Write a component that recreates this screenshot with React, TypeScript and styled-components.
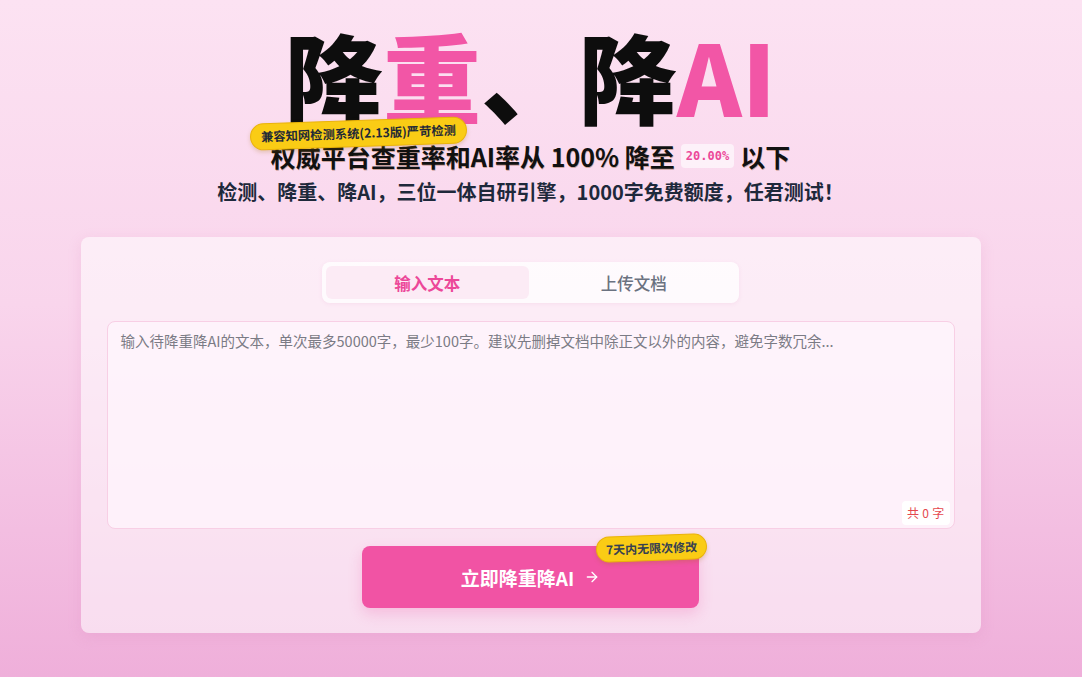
import styled, { createGlobalStyle } from "styled-components";
import { ArrowRight } from "lucide-react";

const GlobalStyle = createGlobalStyle`
  html, body {
    margin: 0;
    padding: 0;
  }
  body {
    min-height: 100vh;
    font-family: "Noto Sans CJK SC", "Noto Sans", sans-serif;
    background: linear-gradient(180deg, #fce2f2 0%, #f9d5ec 45%, #efafda 100%);
    background-attachment: fixed;
  }
  * {
    box-sizing: border-box;
  }
`;

const Page = styled.main`
  min-height: 100vh;
  display: flex;
  flex-direction: column;
  align-items: center;
  padding: 25px 21px 0 0;
`;

const Title = styled.h1`
  margin: 0;
  font-size: 98px;
  line-height: 1;
  font-weight: 900;
  color: #0d0d0d;
  white-space: nowrap;
`;

const Pink = styled.span`
  color: #f256a6;
`;

const Subtitle = styled.div`
  position: relative;
  margin-top: 17px;
  font-size: 25px;
  line-height: 32px;
  font-weight: 700;
  color: #111;
  display: flex;
  align-items: center;
  gap: 6px;
  text-shadow: 0.5px 0.5px 0 rgba(120, 60, 0, 0.35);
`;

const Sticker = styled.span`
  position: absolute;
  background: #facc15;
  border: 1px solid #eab308;
  color: #1f2937;
  font-size: 12.3px;
  font-weight: 700;
  line-height: 17px;
  padding: 4px 10px;
  border-radius: 999px;
  white-space: nowrap;
  box-shadow: 0 2px 4px rgba(160, 110, 0, 0.25);
  transform: rotate(-2deg);
  text-shadow: none;
`;

const TitleSticker = styled(Sticker)`
  left: -21px;
  top: -20px;
`;

const Chip = styled.span`
  font-family: "DejaVu Sans Mono", "Liberation Mono", monospace;
  font-size: 12px;
  font-weight: 700;
  color: #ec4899;
  background: rgba(255, 255, 255, 0.6);
  border-radius: 4px;
  padding: 4px 5px;
  line-height: 16px;
  text-shadow: none;
`;

const Tagline = styled.p`
  margin: 6px 0 0;
  font-size: 20px;
  line-height: 28px;
  font-weight: 700;
  color: #1e293b;
`;

const Card = styled.section`
  margin-top: 31px;
  width: 900px;
  padding: 25px 26px 25px;
  background: rgba(255, 255, 255, 0.55);
  border-radius: 8px;
  box-shadow: 0 4px 14px rgba(214, 120, 180, 0.18);
  display: flex;
  flex-direction: column;
  align-items: center;
`;

const Tabs = styled.div`
  width: 417px;
  display: flex;
  padding: 4px;
  gap: 4px;
  background: rgba(255, 255, 255, 0.75);
  border-radius: 8px;
  box-shadow: 0 1px 4px rgba(214, 120, 180, 0.12);
`;

const Tab = styled.button<{ $active?: boolean }>`
  flex: 1;
  height: 33px;
  border: none;
  border-radius: 6px;
  font-family: inherit;
  font-size: 16.5px;
  font-weight: ${({ $active }) => ($active ? 700 : 500)};
  color: ${({ $active }) => ($active ? "#ec4899" : "#6b7280")};
  background: ${({ $active }) => ($active ? "#fcebf5" : "transparent")};
  cursor: pointer;
`;

const Editor = styled.div`
  position: relative;
  margin-top: 18px;
  width: 100%;
  height: 208px;
  border: 1px solid #f8cfe5;
  border-radius: 8px;
  background: rgba(255, 246, 252, 0.75);
`;

const TextInput = styled.textarea`
  width: 100%;
  height: 100%;
  border: none;
  outline: none;
  resize: none;
  background: transparent;
  padding: 8px 13px;
  font-family: inherit;
  font-size: 14.5px;
  line-height: 22px;
  color: #374151;

  &::placeholder {
    color: #7b7b85;
  }
`;

const Counter = styled.span`
  position: absolute;
  right: 4px;
  bottom: 3px;
  background: #fff;
  border-radius: 4px;
  padding: 3px 5px;
  font-size: 12px;
  line-height: 18px;
  color: #e5484d;
  letter-spacing: 0.3px;
`;

const ActionWrap = styled.div`
  position: relative;
  margin-top: 17px;
`;

const SubmitButton = styled.button`
  width: 337px;
  height: 62px;
  border: none;
  border-radius: 8px;
  background: #f153a4;
  color: #fff;
  font-family: inherit;
  font-size: 19px;
  font-weight: 700;
  display: flex;
  align-items: center;
  justify-content: center;
  gap: 10px;
  box-shadow: 0 6px 14px rgba(236, 72, 153, 0.22);
  cursor: pointer;
`;

const ButtonSticker = styled(Sticker)`
  right: -8px;
  top: -11px;
  font-size: 12px;
  line-height: 16px;
  color: #374151;
  padding: 4px 9px;
`;

export default function App() {
  return (
    <>
      <GlobalStyle />
      <Page>
        <Title>
          降<Pink>重</Pink>、降<Pink>AI</Pink>
        </Title>
        <Subtitle>
          <TitleSticker>兼容知网检测系统(2.13版)严苛检测</TitleSticker>
          <span>权威平台查重率和AI率从 100% 降至</span>
          <Chip>20.00%</Chip>
          <span>以下</span>
        </Subtitle>
        <Tagline>检测、降重、降AI，三位一体自研引擎，1000字免费额度，任君测试！</Tagline>
        <Card>
          <Tabs>
            <Tab $active>输入文本</Tab>
            <Tab>上传文档</Tab>
          </Tabs>
          <Editor>
            <TextInput placeholder="输入待降重降AI的文本，单次最多50000字，最少100字。建议先删掉文档中除正文以外的内容，避免字数冗余..." />
            <Counter>共 0 字</Counter>
          </Editor>
          <ActionWrap>
            <SubmitButton>
              立即降重降AI
              <ArrowRight size={16} strokeWidth={2} />
            </SubmitButton>
            <ButtonSticker>7天内无限次修改</ButtonSticker>
          </ActionWrap>
        </Card>
      </Page>
    </>
  );
}
